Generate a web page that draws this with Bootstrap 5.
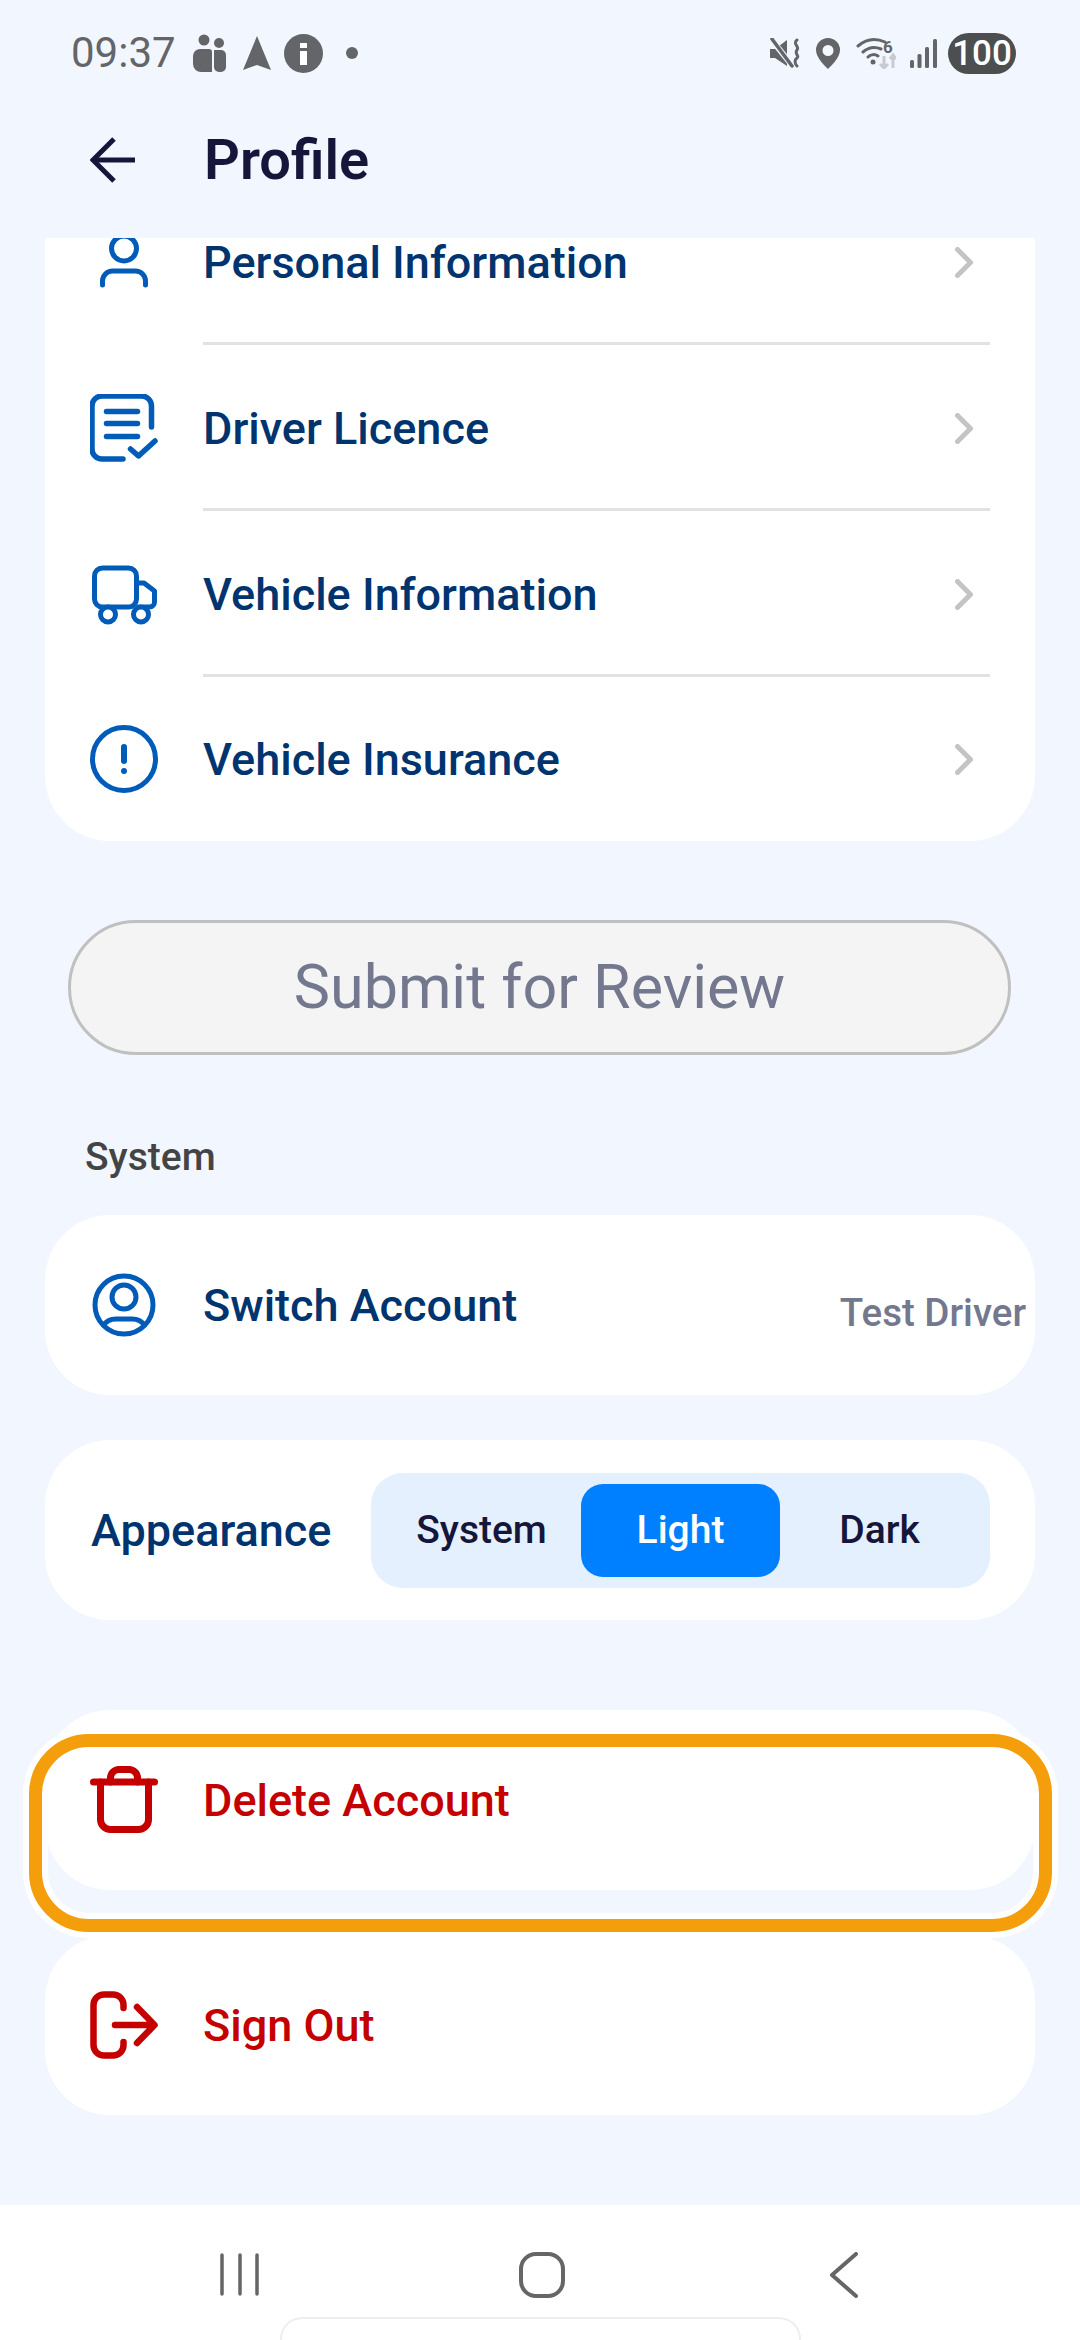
<!DOCTYPE html>
<html lang="en">
<head>
<meta charset="utf-8">
<title>Profile</title>
<link rel="stylesheet" href="https://cdn.jsdelivr.net/npm/bootstrap@5.3.0/dist/css/bootstrap.min.css">
<style>
html,body{margin:0;padding:0;background:#F2F7FF}
body{width:1080px;height:2340px;overflow:hidden;font-family:Roboto,"Liberation Sans",sans-serif}
svg{display:block;flex:none}
.shell{width:1080px;height:2340px}
.statusline{height:106px;padding:0 64px 0 71px;color:#636569}
.clock{font-size:42px;line-height:1;width:122px}
.batt{width:68px;height:41px;border-radius:21px;background:#4d4e50;color:#fff;font-size:35px;font-weight:500;line-height:41px;text-align:center}
.topbar{height:132px;padding:0 0 24px 90px;color:#16163a}
.topbar h1{font-size:56px;font-weight:600;margin:0 0 0 69px;line-height:1;color:#16163a}
.scroller{flex:1 1 0;min-height:0;overflow:hidden;padding:0 45px}
.pane{border:0;border-radius:65px;background:#fff}
.firstpane{margin-top:-59px;padding-top:0}
.rowline{padding-left:45px}
.rowtext{height:166px;margin-left:45px;margin-right:45px;border-bottom:3px solid #e2e2e2;padding-right:17px;padding-top:3px;flex:1 1 0;min-width:0}
.rowline:last-child .rowtext{height:164px;border-bottom:0;padding-top:0}
.label{font-size:45px;font-weight:500;color:#00346e;line-height:1}
.danger{color:#c50000}
.submitbtn{display:block;width:943px;height:135px;margin:79px 0 0 23px;border:3px solid #c0c0c0;border-radius:68px;background:#f4f4f4;color:#74788f;font-size:61px;line-height:1;padding:0}
.submitbtn:hover{background:#f4f4f4;border-color:#c0c0c0;color:#74788f}
.seclabel{margin:80px 0 0 40px;font-size:39px;line-height:44px;font-weight:500;color:#444}
.tall{height:180px;padding-left:45px}
.gap36{margin-top:36px}.gap45{margin-top:45px}.gap90{margin-top:90px}
.sidevalue{margin-left:auto;padding:16px 9px 0 0;font-size:38.500px;font-weight:500;color:#74788f;line-height:1}
.appearance{padding-right:45px}
.appearance .label{margin-left:1px}
.segbar{margin-left:auto;width:619px;height:115px;padding:11px;background:#e4f0fe;border-radius:32px}
.segitem{width:199px;border-radius:22px;font-size:39px;font-weight:500;color:#16163a;line-height:1}
.segitem.on{background:#007fff;color:#fff}
.tall .ms-icon{margin-left:45px}
.ring{position:absolute;left:-16px;right:-17px;top:24px;height:198px;border:13px solid #f59e0b;border-radius:60px;box-shadow:0 0 0 6px #fff,inset 0 0 0 6px #fff;pointer-events:none;z-index:2}
.navstrip{height:135px;background:#fff;padding-top:47px;overflow:hidden}
.navcell{width:302px}
.navcells{padding-left:4px}
.gesture{width:521px;height:60px;margin:19px auto 0;border:2px solid #eee;border-bottom:0;border-radius:22px 22px 0 0}
</style>
</head>
<body>
<div class="shell d-flex flex-column">
  <div class="statusline d-flex align-items-center flex-none">
    <span class="clock">09:37</span>
    <svg width="33" height="38" viewBox="0 0 33 38" fill="#636569"><circle cx="11" cy="6" r="5.500"/><circle cx="26" cy="9" r="5"/><path d="M0 22a7 7 0 0 1 7-7h9a3 3 0 0 1 3 3v20H8a8 8 0 0 1-8-8z"/><path d="M21 16h7a5 5 0 0 1 5 5v12a5 5 0 0 1-5 5h-2a5 5 0 0 1-5-5z"/></svg>
    <svg style="margin-left:17px" width="28" height="34" viewBox="0 0 28 34" fill="#636569"><path d="M14 0 28 34 14 29 0 34z"/></svg>
    <svg style="margin-left:13px" width="39" height="39" viewBox="0 0 39 39"><circle cx="19.500" cy="19.500" r="19.500" fill="#636569"/><rect x="16" y="9" width="7" height="5" fill="#fff"/><rect x="16" y="17" width="7" height="14" fill="#fff"/></svg>
    <svg style="margin-left:23px" width="12" height="12" viewBox="0 0 12 12"><circle cx="6" cy="6" r="6" fill="#636569"/></svg>
    <div class="ms-auto d-flex align-items-center">
      <svg width="31" height="30" viewBox="0 0 31 30" fill="#636569"><path d="M0 11h5l12-9v26L5 20H0z"/><path d="M1 1 21 26" stroke="#F2F7FF" stroke-width="6"/><path d="M2 1 22 28" stroke="#636569" stroke-width="3.500" stroke-linecap="round"/><path d="M27 2c-5 4 3 6 0 10s3 6 0 8-2 6 0 8" fill="none" stroke="#636569" stroke-width="3" stroke-linecap="round"/></svg>
      <svg style="margin-left:15px" width="24" height="31" viewBox="0 0 24 31"><path fill-rule="evenodd" fill="#636569" d="M12 0a12 12 0 0 1 12 12c0 7-7 14-12 19C7 26 0 19 0 12A12 12 0 0 1 12 0zm0 7a5.500 5.500 0 1 0 0 11 5.500 5.500 0 0 0 0-11z"/></svg>
      <svg style="margin-left:16px" width="40" height="32" viewBox="0 0 40 32" fill="none"><path d="M2 9C10 2 20 1 29 5M7 15c6-5 13-5 18-3M12 20c3-3 7-3 10-1" stroke="#636569" stroke-width="3" stroke-linecap="round"/><circle cx="17" cy="25" r="2.500" fill="#636569"/><path d="M28 19v12m-4-4 4 4 4-4" stroke="#c8cad0" stroke-width="3"/><path d="M37 31V18m-3 4 3-4 3 4" stroke="#c8cad0" stroke-width="3"/><text x="27" y="16" font-size="17" font-weight="700" fill="#636569" font-family="Roboto,sans-serif">6</text></svg>
      <svg style="margin-left:14px" width="27" height="29" viewBox="0 0 27 29" fill="#636569"><rect x="0" y="21" width="4" height="8" rx="1.500"/><rect x="7.500" y="15" width="4" height="14" rx="1.500"/><rect x="15" y="8" width="4" height="21" rx="1.500"/><rect x="23" y="0" width="4" height="29" rx="1.500"/></svg>
      <div class="batt" style="margin-left:11px">100</div>
    </div>
  </div>

  <header class="topbar d-flex align-items-center">
    <svg width="45" height="46" viewBox="0 0 45 46" fill="none" stroke="#16163a" stroke-width="5"><path d="M45 23H3"/><path d="M24 2 3 23l21 21"/></svg>
    <h1>Profile</h1>
  </header>

  <main class="scroller">
    <section class="card pane firstpane">
      <div class="rowline d-flex align-items-center">
        <svg width="68" height="68" viewBox="0 0 68 68" fill="none" stroke="#005cb8" stroke-width="5" stroke-linecap="round"><circle cx="34" cy="20.500" r="12.500"/><path d="M12.500 57v-4a10 10 0 0 1 10-10h23a10 10 0 0 1 10 10v4"/></svg>
        <div class="rowtext d-flex align-items-center justify-content-between"><span class="label">Personal Information</span><svg width="18" height="31" viewBox="0 0 18 31" fill="none" stroke="#c4c4c4" stroke-width="5" stroke-linecap="round" stroke-linejoin="round"><path d="M2.500 2.500l13 13-13 13"/></svg></div>
      </div>
      <div class="rowline d-flex align-items-center">
        <svg width="68" height="68" viewBox="0 0 68 68" fill="none" stroke="#005cb8" stroke-width="5.500" stroke-linecap="round" stroke-linejoin="round"><path d="M61.500 33V12a10 10 0 0 0-10-10H12A10 10 0 0 0 2 12v43a10 10 0 0 0 10 10h21"/><path d="M16.500 17.500h31M16.500 29.500h31M16.500 42.500h31"/><path d="M40.500 55l8 7 16.500-15"/></svg>
        <div class="rowtext d-flex align-items-center justify-content-between"><span class="label">Driver Licence</span><svg width="18" height="31" viewBox="0 0 18 31" fill="none" stroke="#c4c4c4" stroke-width="5" stroke-linecap="round" stroke-linejoin="round"><path d="M2.500 2.500l13 13-13 13"/></svg></div>
      </div>
      <div class="rowline d-flex align-items-center">
        <svg width="68" height="68" viewBox="0 0 68 68" fill="none" stroke="#005cb8" stroke-width="5" stroke-linejoin="round"><rect x="4.500" y="8" width="42" height="39" rx="8"/><path d="M46.500 23H54l10.500 8v11a5 5 0 0 1-5 5h-13"/><circle cx="18" cy="54.500" r="7.500" fill="#fff"/><circle cx="51" cy="54.500" r="7.500" fill="#fff"/></svg>
        <div class="rowtext d-flex align-items-center justify-content-between"><span class="label">Vehicle Information</span><svg width="18" height="31" viewBox="0 0 18 31" fill="none" stroke="#c4c4c4" stroke-width="5" stroke-linecap="round" stroke-linejoin="round"><path d="M2.500 2.500l13 13-13 13"/></svg></div>
      </div>
      <div class="rowline d-flex align-items-center">
        <svg width="68" height="68" viewBox="0 0 68 68" fill="none" stroke="#005cb8" stroke-width="5"><circle cx="34" cy="34" r="31.500"/><path d="M34 22v14" stroke-width="6" stroke-linecap="round"/><circle cx="34" cy="46" r="3" fill="#005cb8" stroke="none"/></svg>
        <div class="rowtext d-flex align-items-center justify-content-between"><span class="label">Vehicle Insurance</span><svg width="18" height="31" viewBox="0 0 18 31" fill="none" stroke="#c4c4c4" stroke-width="5" stroke-linecap="round" stroke-linejoin="round"><path d="M2.500 2.500l13 13-13 13"/></svg></div>
      </div>
    </section>

    <button type="button" class="btn submitbtn">Submit for Review</button>

    <div class="seclabel">System</div>

    <section class="card pane tall gap36 d-flex flex-row align-items-center">
      <svg width="68" height="68" viewBox="0 0 68 68" fill="none" stroke="#005cb8" stroke-width="5"><circle cx="34" cy="34" r="29"/><circle cx="34" cy="26" r="12"/><path d="M13 55c3-5 8-7 13-7h16c5 0 10 2 13 7"/></svg>
      <span class="label ms-icon">Switch Account</span>
      <span class="sidevalue">Test Driver</span>
    </section>

    <section class="card pane tall appearance gap45 d-flex flex-row align-items-center">
      <span class="label">Appearance</span>
      <div class="segbar d-flex align-items-stretch">
        <div class="segitem d-flex align-items-center justify-content-center">System</div>
        <div class="segitem on d-flex align-items-center justify-content-center">Light</div>
        <div class="segitem d-flex align-items-center justify-content-center">Dark</div>
      </div>
    </section>

    <section class="card pane tall gap90 d-flex flex-row align-items-center position-relative">
      <svg width="68" height="68" viewBox="0 0 68 68" fill="none" stroke="#c50000" stroke-width="7" stroke-linecap="round" stroke-linejoin="round"><path d="M3.500 16h61"/><path d="M20.500 16v-4A8.500 8.500 0 0 1 29 3.500h10a8.500 8.500 0 0 1 8.500 8.500v4"/><path d="M10.500 16v37.500a10 10 0 0 0 10 10h28a10 10 0 0 0 10-10V16"/></svg>
      <span class="label danger ms-icon">Delete Account</span>
      <div class="ring"></div>
    </section>

    <section class="card pane tall gap45 d-flex flex-row align-items-center">
      <svg width="68" height="68" viewBox="0 0 68 68" fill="none" stroke="#c50000" stroke-width="6.500" stroke-linecap="round" stroke-linejoin="round"><path d="M33.500 17v-3A10.500 10.500 0 0 0 23 3.500h-9A10.500 10.500 0 0 0 3.500 14v40A10.500 10.500 0 0 0 14 64.500h9A10.500 10.500 0 0 0 33.500 54v-3"/><path d="M25 34h39M47 16l17.500 18L47 52"/></svg>
      <span class="label danger ms-icon">Sign Out</span>
    </section>
  </main>

  <nav class="navstrip">
    <div class="navcells d-flex justify-content-center">
      <div class="navcell d-flex justify-content-center"><svg width="40" height="45" viewBox="0 0 40 45" fill="none" stroke="#666" stroke-width="3.500" stroke-linecap="round"><path d="M2 3v39M20 3v39M37 3v39"/></svg></div>
      <div class="navcell d-flex justify-content-center"><svg width="46" height="46" viewBox="0 0 46 46" fill="none" stroke="#666" stroke-width="4"><rect x="2" y="2" width="42" height="42" rx="15"/></svg></div>
      <div class="navcell d-flex justify-content-center"><svg width="30" height="46" viewBox="0 0 30 46" fill="none" stroke="#666" stroke-width="4" stroke-linecap="round" stroke-linejoin="round"><path d="M27 2 3 23l24 21"/></svg></div>
    </div>
    <div class="gesture"></div>
  </nav>
</div>
<script src="https://cdn.jsdelivr.net/npm/bootstrap@5.3.0/dist/js/bootstrap.bundle.min.js"></script>
</body>
</html>
